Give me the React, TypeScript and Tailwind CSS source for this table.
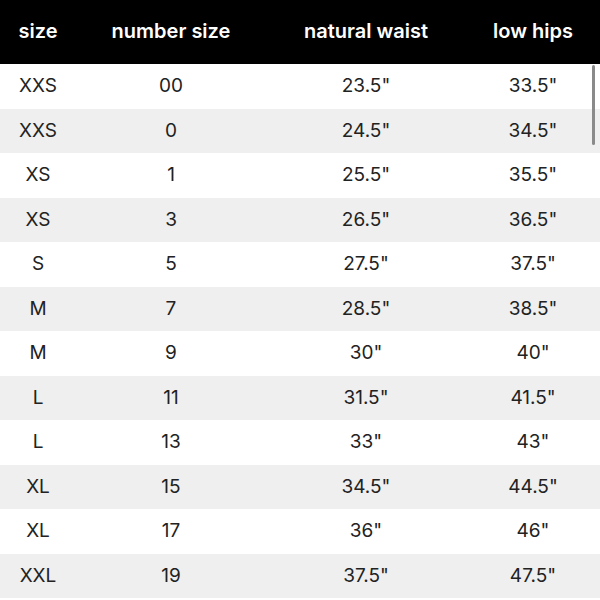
const rows: [string, string, string, string][] = [
  ['XXS', '00', '23.5"', '33.5"'],
  ['XXS', '0', '24.5"', '34.5"'],
  ['XS', '1', '25.5"', '35.5"'],
  ['XS', '3', '26.5"', '36.5"'],
  ['S', '5', '27.5"', '37.5"'],
  ['M', '7', '28.5"', '38.5"'],
  ['M', '9', '30"', '40"'],
  ['L', '11', '31.5"', '41.5"'],
  ['L', '13', '33"', '43"'],
  ['XL', '15', '34.5"', '44.5"'],
  ['XL', '17', '36"', '46"'],
  ['XXL', '19', '37.5"', '47.5"'],
];

const cols = ['w-[76px]', 'w-[190px]', 'w-[200px]', 'flex-1'];

export default function App() {
  return (
    <div className="relative w-[600px] h-[600px] overflow-hidden bg-white font-['Inter',sans-serif]">
      {/* Header */}
      <div className="flex h-[64px] items-center bg-black pb-[2px] text-[20px] font-semibold text-white">
        {['size', 'number size', 'natural waist', 'low hips'].map((h, i) => (
          <div key={h} className={`${cols[i]} text-center`}>
            {h}
          </div>
        ))}
      </div>

      {/* Rows */}
      {rows.map((r, idx) => (
        <div
          key={idx}
          className={`flex h-[44.5px] items-center text-[19px] text-[#222] ${idx % 2 === 1 ? 'bg-[#efefef]' : 'bg-white'}`}
        >
          {r.map((c, i) => (
            <div key={i} className={`${cols[i]} text-center`}>
              {c}
            </div>
          ))}
        </div>
      ))}

      {/* Scrollbar */}
      <div className="absolute right-[5px] top-[65px] h-[80px] w-[3px] rounded-full bg-[#8a8a8a]" />
    </div>
  );
}
